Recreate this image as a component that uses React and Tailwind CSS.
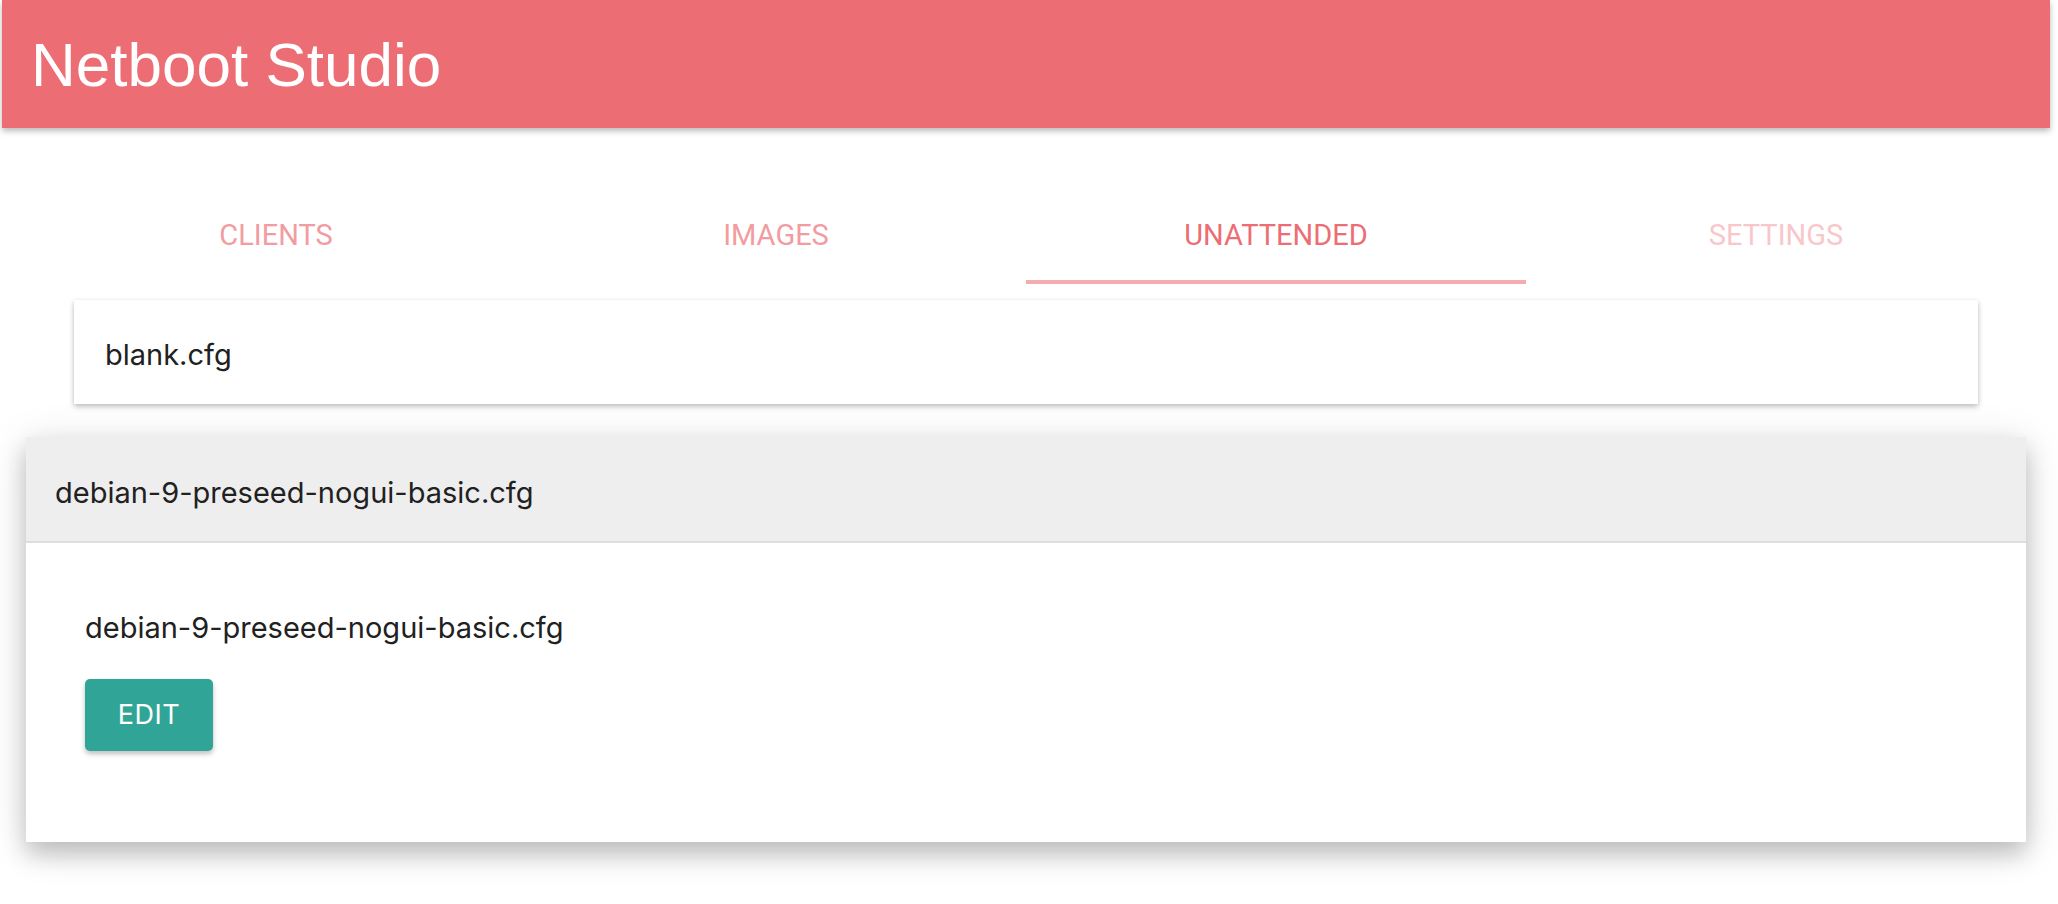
import React from "react";

const tabs = [
  { label: "CLIENTS", cls: "text-[#f29ca1]" },
  { label: "IMAGES", cls: "text-[#f29ca1]" },
  { label: "UNATTENDED", cls: "text-[#ec6e74]", active: true },
  { label: "SETTINGS", cls: "text-[#f8c7ca]" },
];

export default function App() {
  return (
    <div className="min-h-[904px] bg-white">
      <div className="w-[2052px] pb-[40px]">
        <header className="ml-[2px] w-[2048px] h-[128px] bg-[#ec6e74] flex items-center pl-[29px] shadow-[0_3px_6px_rgba(0,0,0,0.28)]">
          <h1
            className="text-white text-[62px] leading-normal"
            style={{ fontFamily: '"Liberation Sans", Arial, sans-serif' }}
          >
            Netboot Studio
          </h1>
        </header>

        <nav className="mt-[60px] mx-[26px] flex h-[96px]">
          {tabs.map((t) => (
            <div key={t.label} className="relative flex-1 flex items-center justify-center">
              <span
                className={`text-[29px] ${t.cls}`}
                style={{ fontFamily: 'Roboto, "Liberation Sans", sans-serif' }}
              >
                {t.label}
              </span>
              {t.active && (
                <div className="absolute left-0 right-0 bottom-0 h-[4px] bg-[#f5acb1]" />
              )}
            </div>
          ))}
        </nav>

        <div
          className="text-[#212121]"
          style={{ fontFamily: 'Inter, "Noto Sans", sans-serif' }}
        >
          <div className="mt-[16px] mx-[74px] h-[104px] bg-white flex items-center pl-[31px] pt-[5px] shadow-[0_3px_6px_rgba(0,0,0,0.2),0_1px_4px_rgba(0,0,0,0.1)]">
            <span className="text-[29px]">blank.cfg</span>
          </div>

          <div className="mt-[33px] mx-[26px] bg-white shadow-[0_12px_22px_rgba(0,0,0,0.2),0_6px_40px_rgba(0,0,0,0.12)]">
            <div className="h-[106px] bg-[#eeeeee] border-b-2 border-[#dedede] flex items-center pl-[29px] pt-[7px]">
              <span className="text-[29px]">debian-9-preseed-nogui-basic.cfg</span>
            </div>
            <div className="pt-[65px] pl-[59px] pb-[91px]">
              <div className="text-[29px] leading-[40px]">debian-9-preseed-nogui-basic.cfg</div>
              <button className="mt-[31px] w-[128px] h-[72px] rounded-[5px] bg-[#30a597] text-white text-[27px] tracking-[0.5px] flex items-center justify-center shadow-[0_3px_5px_rgba(0,0,0,0.25)]">
                EDIT
              </button>
            </div>
          </div>
        </div>
      </div>
    </div>
  );
}
